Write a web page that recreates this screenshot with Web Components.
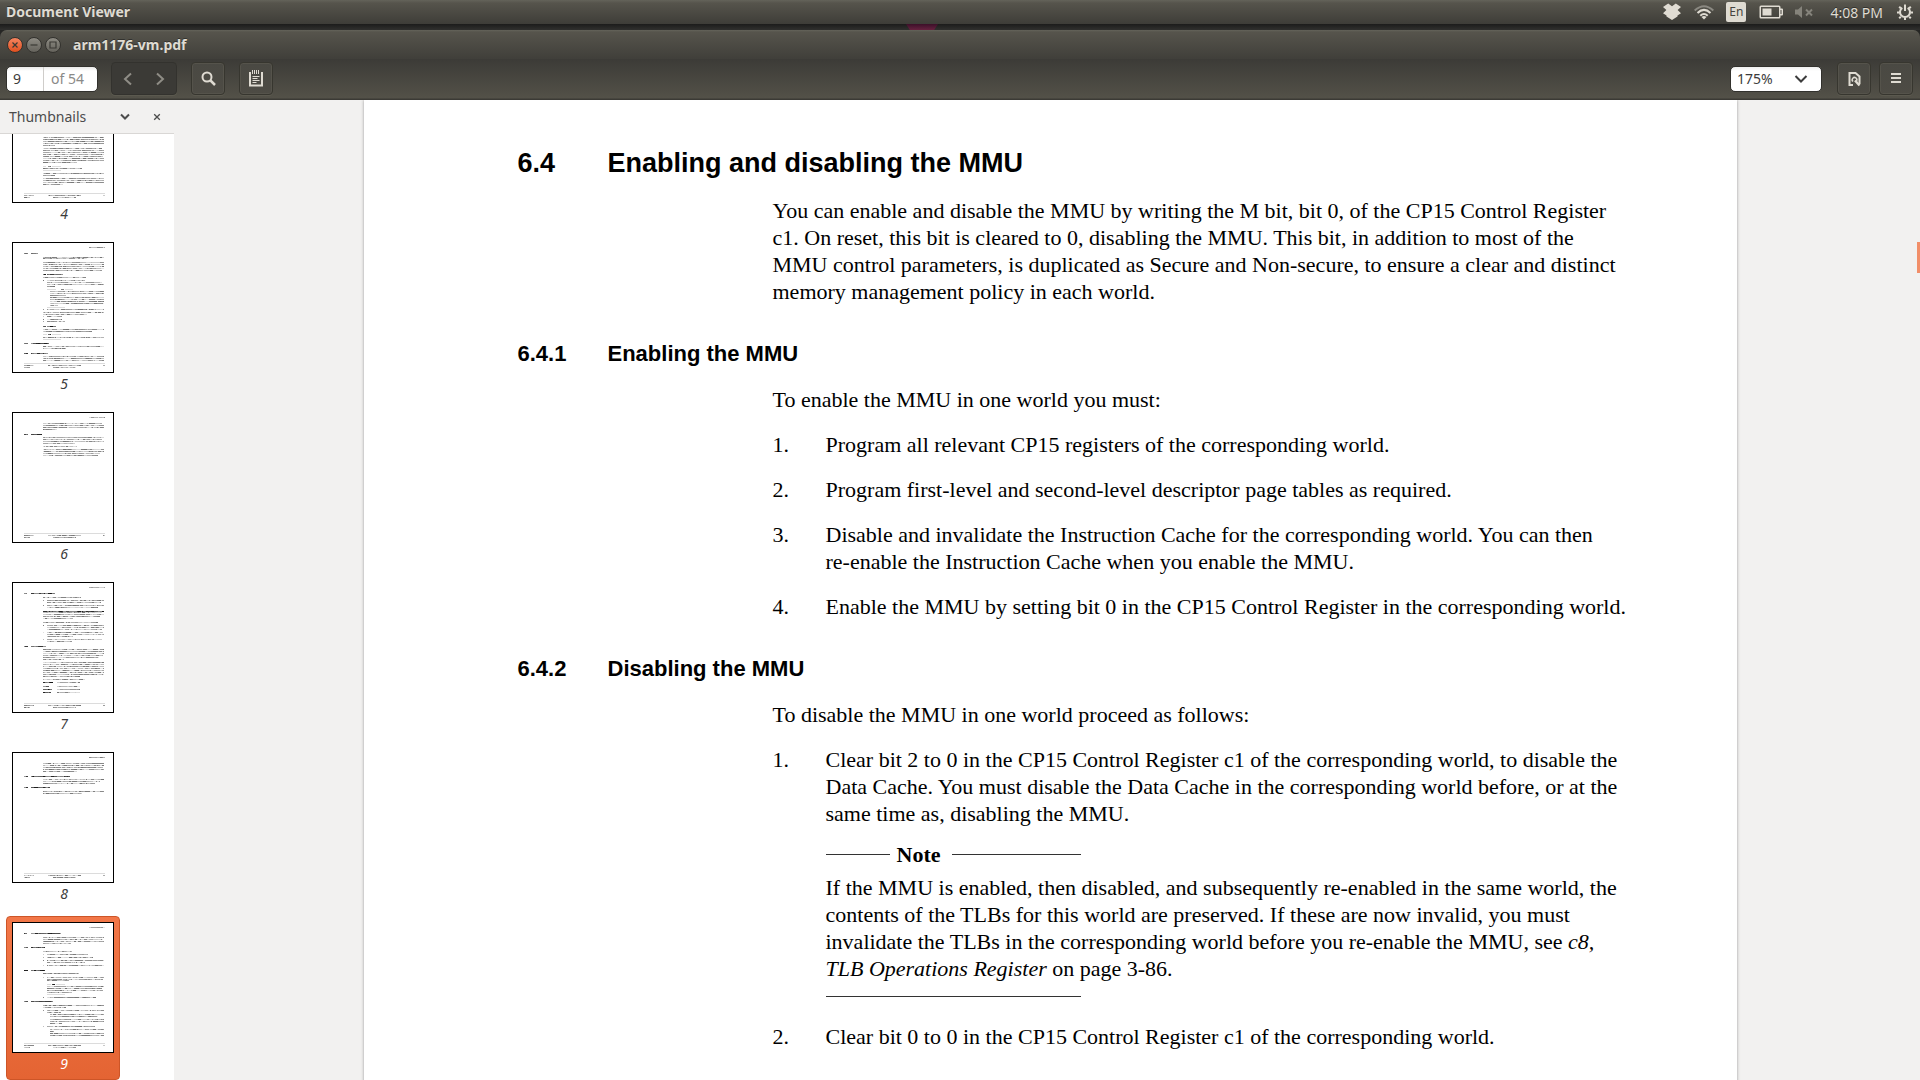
<!DOCTYPE html>
<html lang="en">
<head>
<meta charset="utf-8">
<title>arm1176-vm.pdf</title>
<style>
html,body{margin:0;height:100%}
body{font-family:"Noto Sans","Open Sans",sans-serif;font-size:14px;color:#3c3c3c;overflow:hidden;background:#262624}
</style>
</head>
<body>
<viewer-desktop></viewer-desktop>
<script>
const define = (name, html, setup) => customElements.define(name, class extends HTMLElement {
  constructor() {
    super();
    const t = document.createElement('template');
    t.innerHTML = html;
    this.attachShadow({mode: 'open'}).append(t.content.cloneNode(true));
  }
  connectedCallback() { if (setup) setup.call(this, this.shadowRoot); }
});

/* Top system panel */
define('system-panel', `
<style>
:host{display:flex;align-items:center;justify-content:space-between;height:24px;flex:none;padding:0 7px 0 6px;box-sizing:border-box;
 background:linear-gradient(#64635a,#56544c 3px,#3e3d38);color:#dfdbd2;text-shadow:0 -1px 0 #33322e}
b{line-height:20px}
.tray{display:flex;align-items:center;height:24px}
svg{display:block;fill:#dfdbd2}
.en{background:#dfdbd2;color:#45443f;border-radius:2px;width:20px;height:20px;line-height:20px;text-align:center;font-size:12px;margin:0 13px 0 12px;text-shadow:none}
.time{margin:0 14px 0 17px}
</style>
<b>Document Viewer</b>
<div class="tray">
<svg width="18" height="18" viewBox="0 0 18 18"><path d="M5.200.5 9 3.200 12.800.5 18 4 14.600 7 18 10.200 14.500 12.500V13.500L9 17 3.500 13.500V12.500L0 10.200 3.400 7 0 4z"/></svg>
<svg style="margin-left:13px" width="20" height="16" viewBox="0 0 20 16"><g fill="none" stroke-width="2"><path stroke="#8b8982" d="M.7 6.500Q10-2 19.300 6.500"/><path stroke="#dfdbd2" d="M3.500 9Q10 2.800 16.500 9M6.300 11.800Q10 8.200 13.700 11.800"/></g><path d="M10 15.500 7.500 13Q10 11 12.500 13z"/></svg>
<span class="en">En</span>
<svg width="24" height="14" viewBox="0 0 24 14"><path fill-rule="evenodd" d="M2 .5h18q1.500 0 1.500 1.500v1.500H23q1 0 1 1v5q0 1-1 1h-1.500V12q0 1.500-1.500 1.500H2Q.5 13.500.5 12V2Q.5.500 2 .500zM2 2v10h18V2zM21.500 5v4h1V5z"/><path d="M3.500 3.500h9v7h-9z"/></svg>
<svg style="margin-left:12px" width="18" height="12" viewBox="0 0 18 12"><path fill="#85837b" d="M0 3.500h3L7 0v12L3 8.500H0z"/><path stroke="#85837b" stroke-width="2" d="m11 3.500 6 6m0-6-6 6"/></svg>
<span class="time">4:08 PM</span>
<svg width="16" height="16" viewBox="0 0 16 16" fill="none"><path fill="none" stroke="#dfdbd2" stroke-width="2" d="M5.300 3.800A5 5 0 1 0 10.700 3.800"/><path stroke="#dfdbd2" stroke-width="2" d="M8 .5V7M0 8.500h2.500m11 0H16M8 13.500V16M2.200 14.300l1.600-1.600m10 1.600-1.600-1.600M2.200 2.700l1.600 1.600m10-1.600-1.600 1.600"/></svg>
</div>`);

/* Strip of desktop visible between panel and window */
define('desktop-gap', `
<style>
:host{display:flex;justify-content:center;height:6px;flex:none;background:linear-gradient(#1c1c1b,#30302e)}
i{width:32px;margin-right:76px;background:linear-gradient(#3c1029,#66213f);clip-path:polygon(0 0,100% 0,88% 100%,12% 100%)}
</style><i></i>`);

define('title-bar', `
<style>
:host{display:flex;align-items:center;gap:3px;height:29px;flex:none;padding-left:7px;background:linear-gradient(#64635a,#56544c 2px,#403f3a);border-radius:7px 7px 0 0;color:#dfdbd2;text-shadow:0 -1px 0 #33322e}
button{width:16px;height:16px;border-radius:50%;border:1px solid #33322e;padding:0;background:linear-gradient(#8d8b83,#65635c);display:flex;align-items:center;justify-content:center}
.close{background:linear-gradient(#f58560,#e0501f)}
svg{fill:none;stroke:#3a3934;stroke-width:1.200;flex:none}
b{margin-left:9px;line-height:20px}
</style>
<button class="close" aria-label="Close"><svg width="8" height="8"><path d="m1.500 1.500 5 5m0-5-5 5"/></svg></button>
<button aria-label="Minimize"><svg width="8" height="8"><path d="M.500 4h7"/></svg></button>
<button aria-label="Maximize"><svg width="8" height="8"><path d="M1 1h6v6H1z"/></svg></button>
<b><slot></slot></b>`);

define('tool-button', `
<style>
:host{display:block}
button{width:34px;height:33px;box-sizing:border-box;border:1px solid #37362f;border-radius:4px;background:linear-gradient(#4a4943,#4d4b44);box-shadow:inset 0 0 0 1px #55534b,0 1px 0 #5b594f;padding:0;display:flex;align-items:center;justify-content:center;color:#dfdbd2}
</style>
<button><slot></slot></button>`, function (r) { r.querySelector('button').setAttribute('aria-label', this.getAttribute('label')); });

define('tool-bar', `
<style>
:host{display:flex;align-items:center;height:41px;flex:none;padding:0 7px 2px 6px;box-sizing:border-box;background:linear-gradient(#3c3b37,#535148 39px,#3b3a35 40px);}
svg{display:block;flex:none}
.pager{display:flex;width:92px;height:26px;box-sizing:border-box;border:1px solid #32312d;border-radius:5px;overflow:hidden;line-height:24px;color:#8a8a88;background:linear-gradient(#e8e8e7,#fff 4px)}
.pager input{width:37px;box-sizing:border-box;border:0;border-right:1px solid #cfcdca;padding:0 0 0 6px;background:none;font:inherit;color:#3c3c3c;outline:0}
.pager label{padding-left:7px}
.nav{display:flex;margin:0 14px 0 13px;width:66px;height:33px;box-sizing:border-box;border:1px solid #33322e;border-radius:4px;background:#3b3a36;box-shadow:0 1px 0 #5b594f}
.nav button{flex:1;border:0;background:none;padding:0;display:flex;align-items:center;justify-content:center}
tool-button{margin-right:14px}
.fill{flex:1}
.zoom{display:grid;width:92px;height:26px;margin-right:15px}
.zoom select,.zoom svg{grid-area:1/1}
.zoom select{appearance:none;font:inherit;color:#3c3c3c;border:1px solid #32312d;border-radius:5px;background:linear-gradient(#efefee,#fff 4px);padding:0 0 0 6px;margin:0}
.zoom svg{justify-self:end;align-self:center;margin-right:14px;pointer-events:none}
.r{margin-right:8px}.last{margin:0}
</style>
<div class="pager"><input id="p" value="9"><label for="p">of 54</label></div>
<div class="nav">
<button aria-label="Previous page"><svg width="10" height="14" fill="none" stroke="#8f8d86" stroke-width="2"><path d="M8 1.500 2 7l6 5.500"/></svg></button>
<button aria-label="Next page"><svg width="10" height="14" fill="none" stroke="#8f8d86" stroke-width="2"><path d="M2 1.500 8 7l-6 5.500"/></svg></button>
</div>
<tool-button label="Find"><svg width="15" height="15" fill="none" stroke="#dfdbd2"><circle cx="6" cy="6" r="4.500" stroke-width="2"/><path stroke-width="2.500" d="m9 9 5 5"/></svg></tool-button>
<tool-button label="Annotations"><svg width="14" height="17" fill="none" stroke="#dfdbd2"><path stroke-width="2" d="M1 2v13.500h12V2"/><path d="M3.500 0v4m2-4v4m2-4v4m2-4v4M3.500 6.500h7m-7 2h5m-5 2h7m-7 2h4"/></svg></tool-button>
<span class="fill"></span>
<div class="zoom"><select aria-label="Zoom"><option>175%</option></select><svg width="14" height="10" fill="none" stroke="#3c3c3c" stroke-width="2"><path d="M1.500 2 7 7.500 12.500 2"/></svg></div>
<tool-button class="r" label="View options"><svg width="13" height="16" fill="none" stroke="#dfdbd2" stroke-width="2"><path d="M5 14H1.500V2H7.500L11.500 5.500V13"/><path stroke-width="1.500" d="M5 10.500A2.300 2.300 0 1 1 8.500 10"/><path stroke-width="2.400" d="m7 9.500 4.500 5"/></svg></tool-button>
<tool-button class="last" label="Menu"><svg width="10" height="11" fill="#dfdbd2"><path d="M0 0h10v2H0zM0 4h10v2H0zM0 8h10v2H0z"/></svg></tool-button>`);

/* Row lists of the miniature pages: y, then x1-x2 runs; suffix b = bold, l = rule */
const FOOT = '121 12-93l;123 12-22 36-69 91-93;125 12-18 41-64';
const HEAD = '5 77-93';
const PAGES = {
4:'65 31-92;67 31-92;69 31-92;71 31-92;73 31-43;76 31-90;78 31-92;80 31-92;82 31-92;84 31-91;86 31-92;88 31-92;90 31-65;94 31-34l 36-39b 40-49l;96 31-70;98 31-49l;101 31-92;103 31-43;106 31-92;108 31-92;110 31-92;112 31-51',
5:'11 12-16b 19-26b;15 31-92;16 31-75;20 31-92;22 31-92;24 31-92;26 31-92;28 31-90;32 31-34b 35-51b;35 31-74;38 31-32 35-73;40 35-90;42 35-92;44 35-43;47 35-44l 49-52b 53-61l;49 38-92;51 38-92;53 38-54;55 38-92;57 38-92;59 38-92;61 38-92;63 38-46;65 35-53l;67 31-32 35-92;70 31-92;72 31-75;74 31-32 35-50;77 31-32 35-50;79 31-32 35-53;84 31-34b 35-44b;87 31-92;89 31-80;92 31-35l 36-39b 40-49l;95 31-92;97 31-49l;101 12-16b 19-37b;104 31-92;106 31-54;111 12-16b 19-36b;114 31-92;116 31-92;118 31-92',
6:'11 31-90;13 31-92;15 31-92;17 31-45;22 12-16b 19-30b;25 31-92;27 31-90;29 31-92;31 31-63;34 31-65;37 31-92;39 31-92;41 31-88;43 31-86',
7:'11 12-15b 19-43b;15 31-69;18 31-32 35-92;20 35-89;23 31-32 35-92;25 35-86;29 31-92b;30 31-90;32 31-92;34 31-88;36 31-61;40 31-86;43 31-32 35-92;45 35-92;47 35-90;50 31-32 35-91;52 35-92;54 35-61;57 31-32 35-90;59 35-60;64 12-16b 19-34b;67 31-92;69 31-92;71 31-92;73 31-91;75 31-87;77 31-52;80 31-92;82 31-92;84 31-92;86 31-92;88 31-92;90 31-92;92 31-92;94 31-68;97 31-73;100 31-41b 45-68;104 31-37b 45-68;107 31-40b 45-68;110 31-39b 45-68',
8:'11 31-92;13 31-92;15 31-91;17 31-92;19 31-65;24 12-16b 19-58b;27 31-92;29 31-88;31 31-83;35 12-16b 19-38b;39 31-92;41 31-70',
9:'11 12-15b 19-49b;15 31-92;17 31-91;19 31-92;21 31-59;25 12-16b 19-33b;29 31-60;32 31-32 35-76;35 31-32 35-81;38 31-32 35-92;40 35-73;43 31-32 35-92;48 12-16b 19-33b;51 31-67;55 31-32 35-92;57 35-91;58 35-57;62 35-39l 40-43b 44-53l;64 35-92;66 35-90;68 35-91;70 35-60;72 35-53l;75 31-32 35-84;79 12-16b 19-41b;83 31-92;85 31-54;88 31-32 35-92;90 35-49;92 38-92;94 38-86;97 38-92;99 38-92;101 38-50;104 31-32 35-83;107 38-92;109 38-42;111 38-92;113 38-92'};

define('page-thumb', `
<style>
:host{display:block;flex:none;width:114px;border:1px solid transparent;box-sizing:border-box;height:164px;padding:5px;border-radius:4px;text-align:center;font-style:italic}
:host([selected]){background:linear-gradient(#f27748,#e46433);border-color:#cd5527;color:#fff}
svg{display:block;width:102px;height:131px;background:#fff;box-sizing:border-box}
span{line-height:22px;padding-left:2px}
</style>
<svg viewBox="0 0 102 131" shape-rendering="crispEdges"></svg><span></span>`, function (r) {
  const n = this.getAttribute('page');
  r.querySelector('span').textContent = n;
  let seed = n * 7919, out = '';
  const rnd = () => (seed = seed * 16807 % 2147483647) / 2147483647;
  for (const row of [HEAD, PAGES[n], FOOT].join(';').split(';')) {
    const [y, ...runs] = row.split(' ');
    for (const run of runs) {
      const [a, b] = run.split('-').map(parseFloat), k = run.slice(-1);
      if (k === 'l') { out += `<rect x="${a}" y="${y}" width="${b - a}" height="1" fill="#dcdcdc"/>`; continue; }
      for (let x = a; x < b;) {
        const w = Math.min(b - x, 1 + Math.floor(rnd() * 3));
        const g = Math.round(k === 'b' ? 20 + rnd() * 140 : 115 + rnd() * 115);
        out += `<rect x="${x}" y="${y}" width="${w}" height="1" fill="rgb(${g},${g},${g})"/>`;
        x += w;
      }
    }
  }
  r.querySelector('svg').innerHTML = out + '<path fill="none" stroke="#000" d="M.5.5h101v130H.5z"/>';
});

define('side-pane', `
<style>
:host{display:flex;flex-direction:column;width:174px;flex:none;min-height:0;background:#fff}
header{display:flex;align-items:center;height:34px;flex:none;box-sizing:border-box;border-bottom:1px solid #d9d7d5;background:#f2f1f0;padding-left:9px}
button{border:0;background:none;padding:0;font:inherit;color:#4c4c4c;display:flex;align-items:center}
.pick{width:121px;justify-content:space-between}
.x{margin-left:23px}
svg{display:block;fill:none;stroke:#4c4c4c}
.list{flex:1;min-height:0;overflow:hidden;display:flex;flex-direction:column;justify-content:flex-end;gap:6px;padding-left:6px}
</style>
<header><button class="pick">Thumbnails<svg width="10" height="8" stroke-width="2"><path d="m1 1.500 4 4 4-4"/></svg></button>
<button class="x" aria-label="Close side pane"><svg width="8" height="8" stroke-width="1.300"><path d="m1.200 1.200 5.600 5.600m0-5.600L1.200 6.800"/></svg></button></header>
<div class="list"><page-thumb page="4"></page-thumb><page-thumb page="5"></page-thumb><page-thumb page="6"></page-thumb><page-thumb page="7"></page-thumb><page-thumb page="8"></page-thumb><page-thumb page="9" selected></page-thumb></div>`);

define('doc-heading', `
<style>
:host{display:flex;font:bold 22px/26px "Liberation Sans",Arial,sans-serif;margin:36px 0 19px}
:host([level="1"]){font-size:27px;line-height:30px;margin-top:0}
span{width:90px;flex:none}
h2{font:inherit;margin:0}
</style><span></span><h2><slot></slot></h2>`, function (r) { r.querySelector('span').textContent = this.getAttribute('num'); });

define('doc-para', `
<style>:host{display:block;margin-left:255px;white-space:nowrap}</style><slot></slot>`);

define('doc-item', `
<style>
:host{display:flex;margin:18px 0 0 255px;white-space:nowrap}
span{width:53px;flex:none}
</style><span></span><div><slot></slot></div>`, function (r) { r.querySelector('span').textContent = this.getAttribute('num') + '.'; });

define('doc-note', `
<style>
:host{display:block;margin:14px 0 26px}
.cap{display:flex;align-items:center;width:255px;margin-bottom:6px;font-weight:bold}
i{height:1px;background:#333;flex:1}
i:first-child{flex:none;width:64px;margin-right:7px}
i:last-child{margin-left:12px}
.end{width:255px;height:1px;background:#333;margin-top:14px}
</style><div class="cap"><i></i>Note<i></i></div><slot></slot><div class="end"></div>`);

define('doc-page', `
<style>
:host{display:block;box-sizing:border-box;width:1373px;max-width:100%;flex:none;min-height:1776px;padding:48px 0 0 154px;background:#fff;color:#000;
 font:22px/27px "Liberation Serif","Times New Roman",serif;box-shadow:0 0 3px #999}
</style><slot></slot>`);

define('doc-view', `
<style>
:host{display:flex;flex:1;min-width:0;min-height:0;overflow:hidden;justify-content:center;align-items:flex-start;background:#f2f1f0;padding-left:6px;position:relative}
.bar{position:absolute;right:0;top:142px;width:3px;height:31px;background:#f28e68}
</style>
<doc-page>
<doc-heading level="1" num="6.4">Enabling and disabling the MMU</doc-heading>
<doc-para>You can enable and disable the MMU by writing the M bit, bit 0, of the CP15 Control Register<br>c1. On reset, this bit is cleared to 0, disabling the MMU. This bit, in addition to most of the<br>MMU control parameters, is duplicated as Secure and Non-secure, to ensure a clear and distinct<br>memory management policy in each world.</doc-para>
<doc-heading num="6.4.1">Enabling the MMU</doc-heading>
<doc-para>To enable the MMU in one world you must:</doc-para>
<doc-item num="1">Program all relevant CP15 registers of the corresponding world.</doc-item>
<doc-item num="2">Program first-level and second-level descriptor page tables as required.</doc-item>
<doc-item num="3">Disable and invalidate the Instruction Cache for the corresponding world. You can then<br>re-enable the Instruction Cache when you enable the MMU.</doc-item>
<doc-item num="4">Enable the MMU by setting bit 0 in the CP15 Control Register in the corresponding world.</doc-item>
<doc-heading num="6.4.2">Disabling the MMU</doc-heading>
<doc-para>To disable the MMU in one world proceed as follows:</doc-para>
<doc-item num="1">Clear bit 2 to 0 in the CP15 Control Register c1 of the corresponding world, to disable the<br>Data Cache. You must disable the Data Cache in the corresponding world before, or at the<br>same time as, disabling the MMU.<doc-note>If the MMU is enabled, then disabled, and subsequently re-enabled in the same world, the<br>contents of the TLBs for this world are preserved. If these are now invalid, you must<br>invalidate the TLBs in the corresponding world before you re-enable the MMU, see <em>c8,<br>TLB Operations Register</em> on page 3-86.</doc-note></doc-item>
<doc-item num="2" style="margin-top:0">Clear bit 0 to 0 in the CP15 Control Register c1 of the corresponding world.</doc-item>
</doc-page>
<div class="bar"></div>`);

define('viewer-desktop', `
<style>
:host{display:flex;flex-direction:column;height:100vh}
main{display:flex;flex:1;min-height:0}
</style>
<system-panel></system-panel><desktop-gap></desktop-gap>
<title-bar>arm1176-vm.pdf</title-bar><tool-bar></tool-bar>
<main><side-pane></side-pane><doc-view></doc-view></main>`);
</script>
</body>
</html>
